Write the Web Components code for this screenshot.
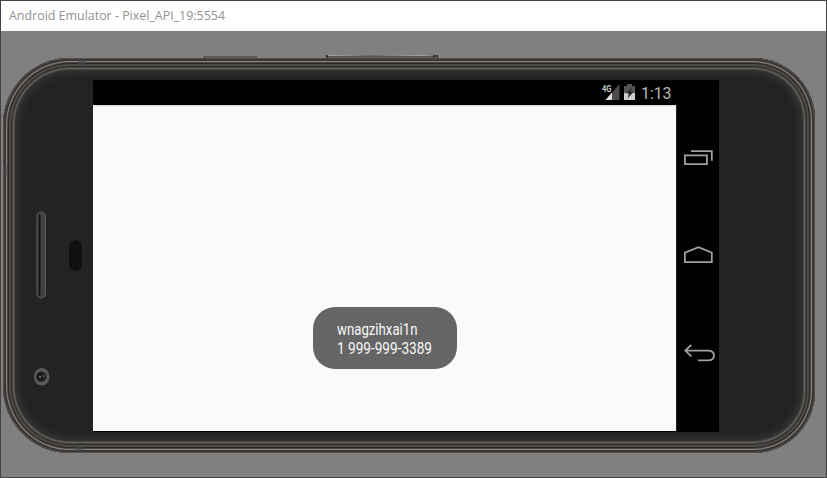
<!DOCTYPE html>
<html lang="en"><head><meta charset="utf-8"><title>Android Emulator</title>
<style>html,body{margin:0;width:827px;height:478px;overflow:hidden;background:#808080}</style></head>
<body>
<emulator-window>
  <fit-text slot="title" w="216" h="20" base="14" size="12.5" color="#929292" face="Open Sans">Android Emulator - Pixel_API_19:5554</fit-text>
  <phone-frame>
    <phone-screen>
      <status-bar slot="status"></status-bar>
      <toast-message slot="toast">
        <fit-text w="80.5" h="19" base="14" size="16.6" color="#f7f7f7" face="Roboto">wnagzihxai1n</fit-text>
        <fit-text w="95" h="19" base="14" size="16.6" color="#f7f7f7" face="Roboto">1 999-999-3389</fit-text>
      </toast-message>
      <nav-rail slot="nav"></nav-rail>
    </phone-screen>
  </phone-frame>
</emulator-window>
<script>
const define = (name, html) => customElements.define(name, class extends HTMLElement {
  constructor() { super(); this.attachShadow({mode: 'open'}).innerHTML = html; }
});

// One line of text set to an exact width.
customElements.define('fit-text', class extends HTMLElement {
  connectedCallback() {
    const a = n => this.getAttribute(n);
    const text = this.textContent.trim();
    this.attachShadow({mode: 'open'}).innerHTML = `<style>:host{display:block;height:${a('h')}px}svg{display:block;overflow:visible}</style>
      <svg width="${a('w')}" height="${a('h')}"><text x="0" y="${a('base')}" fill="${a('color')}" font-family="${a('face')}, sans-serif" font-size="${a('size')}" textLength="${a('w')}" lengthAdjust="spacingAndGlyphs"></text></svg>`;
    this.shadowRoot.querySelector('text').textContent = text;
  }
});

define('emulator-window', `<style>
  :host{display:flex;flex-direction:column;box-sizing:border-box;width:827px;height:478px;border:1px solid #434141;background:#808080}
  header{height:30px;flex:none;background:#fff;padding:5px 0 0 8px;box-sizing:border-box}
  main{flex:1;padding:27px 0 0 2px}
</style><header><slot name="title"></slot></header><main><slot></slot></main>`);

define('phone-frame', `<style>
  :host{display:block;position:relative;width:812px;height:395px}
  .body{box-sizing:border-box;width:812px;height:395px;border-radius:67px 62px 62px 67px;padding:22px 0 0 90px;background:#252223;
    box-shadow:inset 0 0 0 1px #55514f,inset 0 0 0 2px #383433,inset 0 0 0 3px #3a3634,inset 0 0 0 4px #8b8580,inset 0 0 0 5px #4b4643,inset 0 0 0 6px #2b2827,inset 0 0 0 8px #504b45,inset 0 0 0 9px #302e2c,inset 0 0 0 10px #454442,inset 0 0 0 11px #626361,inset 0 0 0 12px #454543,inset 0 0 9px 14px #3b3a39}
  svg{position:absolute;left:0;top:0;overflow:visible}
</style>
<div class="body"><slot></slot></div>
<svg width="812" height="395" viewBox="3 58 812 395">
  <defs><linearGradient id="v" gradientUnits="userSpaceOnUse" x1="328" y1="0" x2="437" y2="0"><stop offset="0" stop-color="#aaa7a3"/><stop offset=".4" stop-color="#6c6661"/><stop offset=".85" stop-color="#aaa5a0"/><stop offset="1" stop-color="#706b67"/></linearGradient></defs>
  <path d="M202 56h55v2.5h-55z" fill="#5f5955"/><path d="M202 56h1v2h-1z" fill="#928f8c"/>
  <path d="M327 55h110v3.5H327z" fill="#5b554f"/><path d="M328 55h105v1H328z" fill="url(#v)"/>
  <path d="M326 55h1.5v3h-1.5zM433.5 55h1v3h-1zM436.5 55h1.5v2.5h-1.5z" fill="#252322"/>
  <path d="M78 60h8v6h-8zM75 446h8v5h-8zM757 444l12-1-3 3-9 1z" fill="#454345" opacity=".65"/>
  <path d="M3 166h4v9H3z" fill="#4d4a4c" opacity=".5"/>
  <rect x="37" y="212" width="8.5" height="86" rx="4.2" fill="#434242" stroke="#5c5b5b"/>
  <path d="M39.5 215v80" stroke="#171617" stroke-width="2" stroke-linecap="round"/>
  <rect x="69" y="240" width="13" height="31" rx="6.5" fill="#101011"/>
  <ellipse cx="41.7" cy="376.7" rx="7.8" ry="8.8" fill="#5c5b5b"/><circle cx="41.3" cy="376.7" r="5" fill="#1b1b1c" stroke="#353435"/>
  <circle cx="40" cy="377" r="1" fill="#777"/><circle cx="43.5" cy="376" r="1.2" fill="#555"/>
</svg>`);

define('phone-screen', `<style>
  :host{display:grid;grid-template:25px 327px / 583px 43px;width:626px;height:352px;background:#000}
  .nav{grid-column:2;grid-row:1/3}
  .app{background:#fafafa;margin-bottom:1px;box-shadow:inset 0 1px #dedede,inset 0 3px 2px -1px #f0f0f0;padding:202px 0 0 219.5px;box-sizing:border-box}
</style><slot name="status"></slot><div class="nav"><slot name="nav"></slot></div><div class="app"><slot name="toast"></slot></div>`);

define('toast-message', `<style>
  :host{display:block;box-sizing:border-box;width:144px;height:62px;border-radius:22px;background:#656565;padding:14px 0 0 24.5px}
</style><slot></slot>`);

define('status-bar', `<style>:host{display:flex;justify-content:flex-end;background:#000}svg{display:block}</style>
<svg width="83" height="25" viewBox="593 80 83 25">
  <path d="M619.5 84v16h-14z" fill="#4c4c4c"/><path d="M602 84h9.5v9H602z" fill="#000"/><path d="M612 92.6v7.4h-6.5z" fill="#dedede"/>
  <text x="602" y="92" font-family="Roboto, sans-serif" font-weight="700" font-size="9.5" fill="#c5c5c5" textLength="9.5" lengthAdjust="spacingAndGlyphs">4G</text>
  <path d="M624 86h3v-2h5v2h3v14h-11z" fill="#555"/><path d="M624 93h11v7h-11z" fill="#cdcdcd"/>
  <path d="M632 87.5l-5.6 6h2.6l-1.5 5 5.8-6.5h-2.7z" fill="#222"/>
  <text x="641" y="99" font-family="Roboto, sans-serif" font-size="16.8" fill="#b9b9b9" textLength="30.5" lengthAdjust="spacingAndGlyphs">1:13</text>
</svg>`);

define('nav-rail', `<style>:host,svg{display:block}</style>
<svg width="43" height="352" viewBox="676 80 43 352" fill="none" stroke="#a0a0a0" stroke-width="1.8">
  <path d="M676.5 105v327" stroke="#222" stroke-width="1"/>
  <path d="M684.9 155.4h22v8.8h-22zM691 151.1h20.8v9.7"/>
  <path d="M684.9 262.2v-9.6l13.6-5.4 13.3 5.4v9.6z"/>
  <path d="M685 350.6h22.8q6.2 0 6.2 4.9t-6.2 4.9H698M691.3 344.8l-6 5.8 6 5.8"/>
</svg>`);
</script></body></html>
